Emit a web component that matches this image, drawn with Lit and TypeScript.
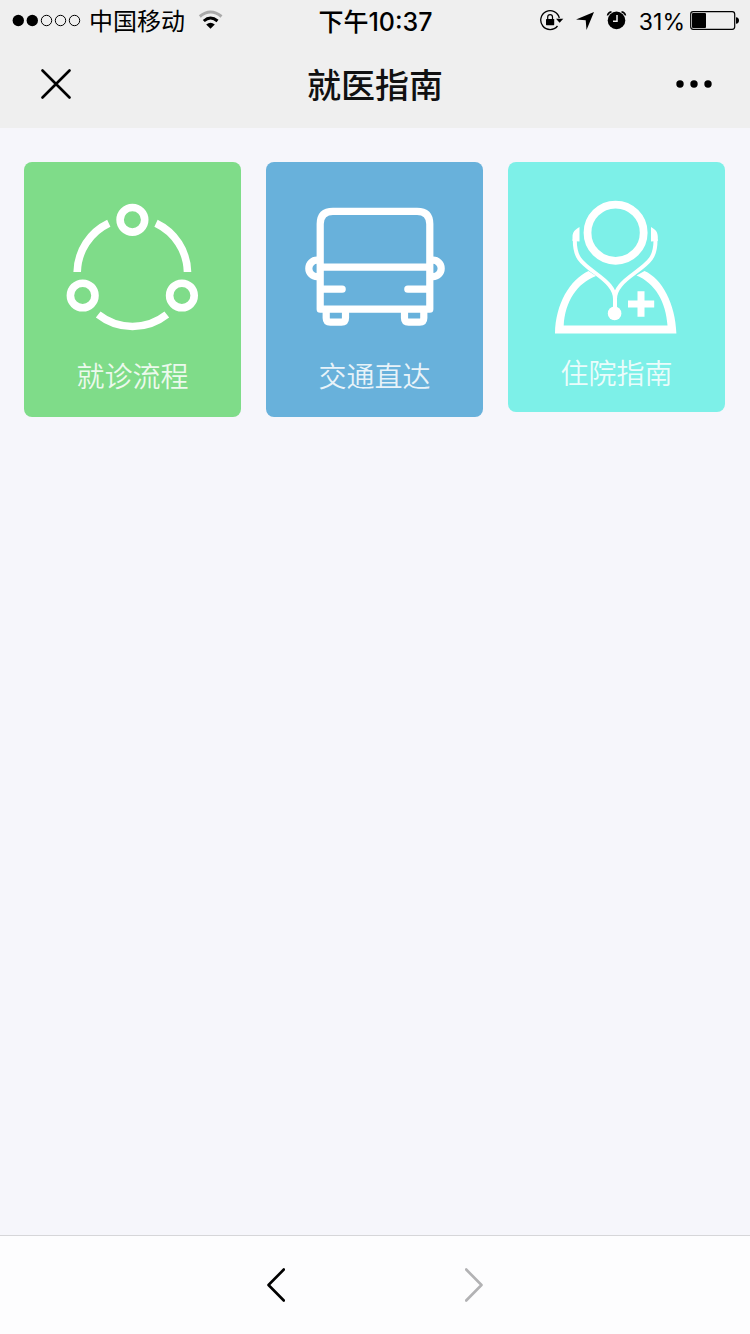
import { LitElement, html, css } from "lit";
import { customElement } from "lit/decorators.js";

const flowIcon = html`<svg class="art" viewBox="60 196 145 145" width="145" height="145" aria-hidden="true">
  <g fill="none" stroke="#fff" stroke-width="7.6">
    <circle cx="132.4" cy="219.8" r="12.3" />
    <circle cx="82.7" cy="295.5" r="12.3" />
    <circle cx="181.9" cy="295.5" r="12.3" />
    <path d="M77.2 272A55.2 55.2 0 0 1 108.8 223.3M156 223.3A55.2 55.2 0 0 1 187.5 272M98.2 314.5A55.2 55.2 0 0 0 166.8 314.5" />
  </g>
</svg>`;

const busIcon = html`<svg class="art" viewBox="302 196 145 145" width="145" height="145" aria-hidden="true">
  <g fill="none" stroke="#fff" stroke-width="7.2" stroke-linejoin="round">
    <path d="M320.2 309.2V224Q320.2 211.3 333 211.3H417Q429.8 211.3 429.8 224V309.2Z" />
    <path d="M320 267.2H430" />
    <path d="M322 289.2H342.2M428 289.2H407.8" stroke-linecap="round" />
    <path d="M319 260.2H317A8.2 8.2 0 0 0 317 276.6H319M431 260.2H433A8.2 8.2 0 0 1 433 276.6H431" />
    <path d="M326.2 309V318Q326.2 322.1 330.3 322.1H341.4Q345.5 322.1 345.5 318V309M404.5 309V318Q404.5 322.1 408.6 322.1H419.7Q423.8 322.1 423.8 318V309" />
  </g>
</svg>`;

const doctorIcon = html`<svg class="art" viewBox="544 196 145 142" width="145" height="142" aria-hidden="true">
  <circle cx="615.6" cy="232.7" r="28.1" fill="none" stroke="#fff" stroke-width="7.8" />
  <path fill="#fff" fill-rule="evenodd" d="M555 333.4C555.5 304 570 279.5 588.5 271L596 276C577 283 565 302 563.7 325.5H667.5C666 302 655 283 636.5 275.5L644.5 271C662 278.5 675.5 304 676.4 333.4Z" />
  <path fill="#fff" d="M579.5 227V241.5L572.5 241V237C572.5 232 575 229.5 579.5 227ZM651 227V241.5L657.8 241V237C657.8 232 655.5 229.5 651 227Z" />
  <path fill="none" stroke="#fff" stroke-width="4" d="M574.8 239C574.5 257 580 262 596 273.5C607 281.5 615 289 615 299V309M655.5 239C655.8 257 650 262 634 273.5C623 281.5 615 289 615 299" />
  <circle cx="614.6" cy="313.4" r="6.8" fill="#fff" />
  <path d="M628 304H654.2M641 291.3V316.7" stroke="#fff" stroke-width="7" />
</svg>`;

const entries = [
  { label: "就诊流程", tone: "green", icon: flowIcon },
  { label: "交通直达", tone: "blue", icon: busIcon },
  { label: "住院指南", tone: "aqua", icon: doctorIcon },
];

@customElement("app-root")
export class AppRoot extends LitElement {
  static styles = css`
    :host {
      display: flex;
      flex-direction: column;
      min-height: 100vh;
      background: #f6f6fb;
      color: #000;
      font-family: Inter, "Noto Sans CJK SC", sans-serif;
    }
    svg {
      display: block;
      flex: none;
    }
    button {
      display: grid;
      place-items: center;
      padding: 0;
      border: 0;
      background: none;
      color: inherit;
    }
    .top {
      background: #efefef;
    }
    .status {
      display: grid;
      grid-template-columns: 1fr auto 1fr;
      align-items: center;
      height: 40px;
      padding: 0 11px 0 12px;
      font-size: 24px;
      line-height: 36px;
    }
    .side {
      display: flex;
      align-items: center;
      gap: 8px;
    }
    .carrier,
    .time,
    .percent {
      padding-top: 3px;
    }
    .carrier {
      margin-right: 5px;
    }
    .end {
      justify-content: flex-end;
      gap: 12px;
    }
    .power {
      display: flex;
      align-items: center;
      gap: 5px;
    }
    .percent {
      font-size: 23px;
    }
    .time {
      font-size: 25px;
      font-weight: 500;
    }
    .nav {
      display: grid;
      grid-template-columns: 1fr auto 1fr;
      align-items: center;
      height: 88px;
      padding: 0 32px;
    }
    .nav button {
      width: 48px;
      height: 48px;
    }
    .more {
      justify-self: end;
    }
    h1 {
      margin: 0;
      padding-top: 4px;
      font-size: 34px;
      line-height: 48px;
      font-weight: 500;
      color: #111;
    }
    main {
      flex: 1;
      display: grid;
      grid-template-columns: repeat(3, 1fr);
      align-items: start;
      align-content: start;
      gap: 25px;
      padding: 34px 25px 34px 24px;
    }
    .card {
      display: flex;
      flex-direction: column;
      align-items: center;
      gap: 18px;
      padding: 34px 0 22px;
      border-radius: 8px;
      color: #fff;
      text-decoration: none;
      font-size: 28px;
      line-height: 36px;
      font-weight: 350;
    }
    .label {
      opacity: 0.85;
    }
    .green {
      background: #7fdc89;
    }
    .blue {
      background: #68b1db;
    }
    .aqua {
      background: #7df0e8;
      padding-bottom: 20px;
    }
    .toolbar {
      display: flex;
      justify-content: center;
      align-items: center;
      gap: 150px;
      height: 98px;
      border-top: 1px solid #d6d6d9;
      background: #fdfdfe;
    }
    .toolbar button {
      width: 48px;
      height: 48px;
    }
    .toolbar button:disabled {
      color: #b2b2b4;
    }
  `;

  render() {
    return html`
      <header class="top">
        <div class="status">
          <div class="side">
            <svg viewBox="12 14 69 13" width="69" height="13" aria-hidden="true">
              <circle cx="18.3" cy="20.5" r="5.7" /><circle cx="32.3" cy="20.5" r="5.7" />
              <g fill="none" stroke="#000" stroke-width="1"><circle cx="46.5" cy="20.5" r="5.2" /><circle cx="60.5" cy="20.5" r="5.2" /><circle cx="74.5" cy="20.5" r="5.2" /></g>
            </svg>
            <span class="carrier">中国移动</span>
            <svg viewBox="198 10 25 20" width="25" height="20" aria-hidden="true">
              <path fill="none" stroke="#aaa" stroke-width="3" d="M199.8 16.5Q210.5 7.500 221.5 16.5" />
              <path fill="none" stroke="#000" stroke-width="3" d="M203.8 21Q210.5 15 217.5 21" />
              <path d="M206.2 24.5Q210.5 21 214.8 24.5L210.5 28.8Z" />
            </svg>
          </div>
          <span class="time">下午10:37</span>
          <div class="side end">
            <svg viewBox="540 9 25 22" width="25" height="22" aria-hidden="true">
              <path fill="none" stroke="#000" stroke-width="1.3" d="M560.3 18A9.4 9.4 0 1 0 558.5 26" />
              <path d="M557 18.8H564.3L560.6 22.8Z" />
              <rect x="547" y="19" width="8.2" height="6.2" rx="0.6" />
              <path fill="none" stroke="#000" stroke-width="1.2" d="M548.7 19.5V17Q548.7 14.7 551.1 14.7Q553.5 14.7 553.5 17V19.5" />
            </svg>
            <svg viewBox="576 11 18 19" width="18" height="19" aria-hidden="true"><path d="M594 12L586.5 30L585.7 20.3L576 19.5Z" /></svg>
            <svg viewBox="606 10 21 20" width="21" height="20" aria-hidden="true">
              <circle cx="616.5" cy="20.4" r="8.8" />
              <path fill="none" stroke="#000" stroke-width="1.5" d="M607.5 15.5Q608 12.5 611.5 11.7M625.5 15.5Q625 12.5 621.5 11.7" />
              <path fill="none" stroke="#efefef" stroke-width="1.5" d="M617 15V21.2H613" />
            </svg>
            <div class="power">
              <span class="percent">31%</span>
              <svg viewBox="690 11 49 19" width="49" height="19" aria-hidden="true">
                <rect x="690.7" y="11.7" width="44" height="17.6" rx="2.5" fill="none" stroke="#000" stroke-width="1.2" />
                <rect x="692" y="13" width="14" height="15" rx="1" />
                <path d="M736 17.2Q739 17.5 739 20.5Q739 23.5 736 23.8Z" />
              </svg>
            </div>
          </div>
        </div>
        <nav class="nav">
          <button aria-label="关闭">
            <svg viewBox="0 0 30 30" width="30" height="30"><path d="M1.5 1.5L28.5 28.5M28.5 1.5L1.5 28.5" stroke="currentColor" stroke-width="2.6" stroke-linecap="round" /></svg>
          </button>
          <h1>就医指南</h1>
          <button class="more" aria-label="更多">
            <svg viewBox="0 0 36 8" width="36" height="8"><circle cx="4" cy="4" r="3.7" /><circle cx="18" cy="4" r="3.7" /><circle cx="32" cy="4" r="3.7" /></svg>
          </button>
        </nav>
      </header>
      <main>
        ${entries.map((e) => html`<a class="card ${e.tone}" href="#">${e.icon}<span class="label">${e.label}</span></a>`)}
      </main>
      <footer class="toolbar">
        <button aria-label="后退">
          <svg viewBox="0 0 18 34" width="18" height="34"><path d="M16.8 1.5L1.5 17L16.8 32.5" fill="none" stroke="currentColor" stroke-width="2.6" stroke-linecap="round" stroke-linejoin="round" /></svg>
        </button>
        <button aria-label="前进" disabled>
          <svg viewBox="0 0 18 34" width="18" height="34"><path d="M1.2 1.5L16.5 17L1.2 32.5" fill="none" stroke="currentColor" stroke-width="2.6" stroke-linecap="round" stroke-linejoin="round" /></svg>
        </button>
      </footer>
    `;
  }
}
